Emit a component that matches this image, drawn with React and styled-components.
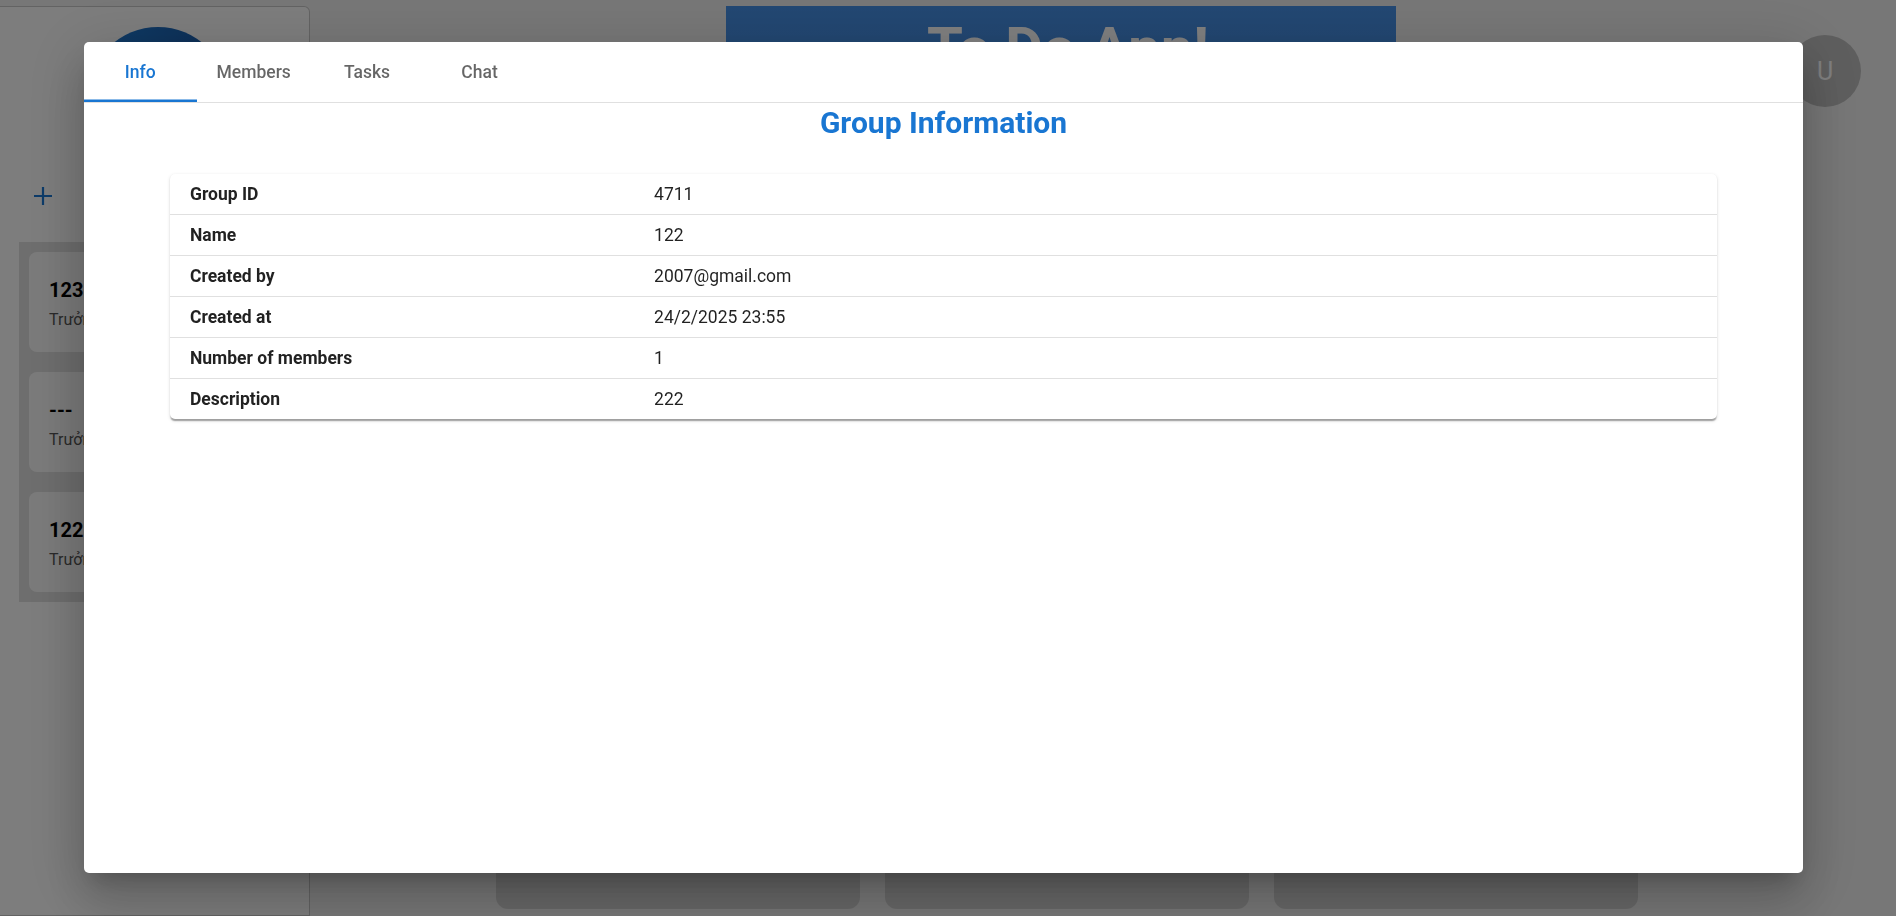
import React, {useState} from 'react';
import styled, {createGlobalStyle} from 'styled-components';

const GlobalStyle = createGlobalStyle`
  html, body {
    margin: 0;
    padding: 0;
    height: 100%;
    overflow: hidden;
  }
  body {
    font-family: Roboto, "Noto Sans", "Liberation Sans", sans-serif;
    background: #eeeeee;
  }
  #root {
    height: 100%;
  }
`;

const groups = [
  {name: '123', leader: 'Trưởng nhóm'},
  {name: '---', leader: 'Trưởng nhóm'},
  {name: '122', leader: 'Trưởng nhóm'},
];

const infoRows = [
  ['Group ID', '4711'],
  ['Name', '122'],
  ['Created by', '2007@gmail.com'],
  ['Created at', '24/2/2025 23:55'],
  ['Number of members', '1'],
  ['Description', '222'],
];

const tabs = ['Info', 'Members', 'Tasks', 'Chat'];

function Background() {
  return (
    <Page>
      <Sidebar>
        <Logo />
        <AddButton>
          <svg width="22" height="22" viewBox="0 0 22 22">
            <path d="M11 2v18M2 11h18" stroke="currentColor" strokeWidth="2.2" fill="none" />
          </svg>
        </AddButton>
        <GroupList>
          {groups.map(g => (
            <GroupCard key={g.name}>
              <GroupName>{g.name}</GroupName>
              <GroupLeader>{g.leader}</GroupLeader>
            </GroupCard>
          ))}
        </GroupList>
      </Sidebar>
      <Main>
        <TopRow>
          <Banner>To Do App!</Banner>
          <UserAvatar>U</UserAvatar>
        </TopRow>
        <CardRow>
          <TaskCard />
          <TaskCard />
          <TaskCard />
        </CardRow>
      </Main>
    </Page>
  );
}

export default function App() {
  const [active, setActive] = useState(0);
  return (
    <>
      <GlobalStyle />
      <Background />
      <Backdrop />
      <Modal>
        <TabBar>
          {tabs.map((t, i) => (
            <Tab key={t} $active={i === active} onClick={() => setActive(i)}>
              {t}
            </Tab>
          ))}
        </TabBar>
        <Title>Group Information</Title>
        <InfoPaper>
          <InfoTable>
            <tbody>
              {infoRows.map(([label, value]) => (
                <InfoRow key={label}>
                  <LabelCell>{label}</LabelCell>
                  <ValueCell>{value}</ValueCell>
                </InfoRow>
              ))}
            </tbody>
          </InfoTable>
        </InfoPaper>
      </Modal>
    </>
  );
}

const Page = styled.div`
  display: flex;
  height: 100%;
  background: #efefef;
`;

const Sidebar = styled.aside`
  width: 310px;
  flex-shrink: 0;
  margin-top: 6px;
  box-sizing: border-box;
  background: #fbfbfb;
  border: 1px solid #c6c6c6;
  border-left: none;
  border-radius: 0 6px 0 0;
  display: flex;
  flex-direction: column;
  padding-top: 20px;
`;

const Logo = styled.div`
  width: 140px;
  height: 140px;
  border-radius: 50%;
  margin-left: 88px;
  background: linear-gradient(120deg, #1f7ad0 0%, #1b5fae 55%, #18407f 100%);
`;

const AddButton = styled.div`
  color: #1976d2;
  margin: 18px 0 0 32px;
  height: 22px;
  display: flex;
`;

const GroupList = styled.div`
  margin: 35px 0 0 19px;
  width: 270px;
  background: #dcdcdc;
  padding: 10px;
  box-sizing: border-box;
  display: flex;
  flex-direction: column;
  gap: 20px;
`;

const GroupCard = styled.div`
  height: 100px;
  background: #f7f7f7;
  border-radius: 8px;
  padding: 26px 20px 0;
  box-sizing: border-box;
  overflow: hidden;
`;

const GroupName = styled.div`
  font-size: 20px;
  font-weight: 700;
  color: #000;
`;

const GroupLeader = styled.div`
  margin-top: 8px;
  font-size: 16px;
  color: #555;
  white-space: nowrap;
`;

const Main = styled.main`
  flex: 1;
  display: flex;
  flex-direction: column;
`;

const TopRow = styled.div`
  display: flex;
  align-items: flex-start;
  padding: 6px 35px 0 416px;
`;

const Banner = styled.div`
  width: 670px;
  height: 130px;
  background: linear-gradient(180deg, #4690e6, #3f84d6);
  color: #ffffff;
  font-size: 58px;
  font-weight: 700;
  text-align: center;
  padding: 8px 0 0 14px;
  box-sizing: border-box;
`;

const UserAvatar = styled.div`
  margin: 29px 0 0 auto;
  width: 72px;
  height: 72px;
  border-radius: 50%;
  background: #bdbdbd;
  color: #fff;
  font-size: 25px;
  display: flex;
  align-items: center;
  justify-content: center;
`;

const CardRow = styled.div`
  display: grid;
  grid-template-columns: repeat(3, 364px);
  gap: 25px;
  padding-left: 186px;
  margin-top: 633px;
`;

const TaskCard = styled.div`
  height: 140px;
  background: #d0d0d0;
  border-radius: 12px;
`;

const Backdrop = styled.div`
  position: fixed;
  inset: 0;
  background: rgba(0, 0, 0, 0.5);
`;

const Modal = styled.div`
  position: fixed;
  left: 84px;
  top: 42px;
  width: 1719px;
  height: 831px;
  background: #fff;
  border-radius: 5px;
  box-shadow: 0 14px 19px -9px rgba(0, 0, 0, 0.2), 0 30px 48px 4px rgba(0, 0, 0, 0.14),
    0 11px 58px 10px rgba(0, 0, 0, 0.12);
  display: flex;
  flex-direction: column;
`;

const TabBar = styled.div`
  display: flex;
  height: 60px;
  border-bottom: 1px solid #e0e0e0;
`;

const Tab = styled.button`
  min-width: 112.5px;
  padding: 0 20px;
  border: none;
  background: none;
  font-family: Roboto, sans-serif;
  font-size: 17.5px;
  font-weight: 500;
  cursor: pointer;
  color: ${p => (p.$active ? '#1976d2' : 'rgba(0, 0, 0, 0.6)')};
  box-shadow: ${p => (p.$active ? 'inset 0 -2.5px 0 #1976d2' : 'none')};
`;

const Title = styled.h2`
  margin: 0 0 31px;
  text-align: center;
  font-size: 30px;
  line-height: 1.334;
  font-weight: 700;
  color: #1976d2;
`;

const InfoPaper = styled.div`
  width: 90%;
  margin: 0 auto;
  background: #fff;
  border-radius: 5px;
  box-shadow: 0 2.5px 1.25px -1.25px rgba(0, 0, 0, 0.2), 0 1.25px 1.25px 0 rgba(0, 0, 0, 0.14),
    0 1.25px 3.75px 0 rgba(0, 0, 0, 0.12);
  overflow: hidden;
`;

const InfoTable = styled.table`
  width: 100%;
  border-collapse: collapse;
`;

const InfoRow = styled.tr`
  &:last-child td {
    border-bottom: none;
  }
`;

const LabelCell = styled.td`
  width: 30%;
  padding: 7.5px 20px;
  font-size: 17.5px;
  line-height: 25px;
  font-weight: 700;
  color: rgba(0, 0, 0, 0.87);
  border-bottom: 1px solid #e0e0e0;
`;

const ValueCell = styled.td`
  padding: 7.5px 20px;
  font-size: 17.5px;
  line-height: 25px;
  color: rgba(0, 0, 0, 0.87);
  border-bottom: 1px solid #e0e0e0;
`;
